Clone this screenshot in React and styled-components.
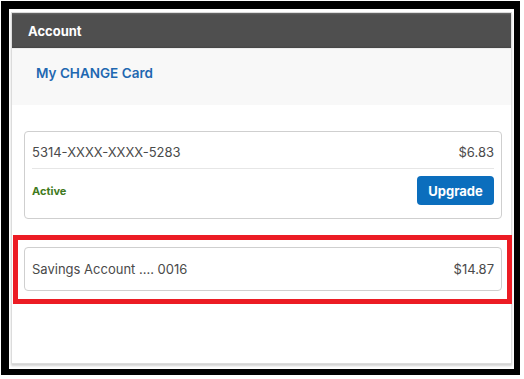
import styled, { createGlobalStyle } from "styled-components"

const Global = createGlobalStyle`
  body {
    margin: 0;
    background: #ffffff;
    font-family: "Inter", "Liberation Sans", sans-serif;
  }
`

const accounts = [
  { id: "card", number: "5314-XXXX-XXXX-5283", balance: "$6.83", status: "Active" },
]

const App = () => {
  return (
    <>
      <Global />
      <Frame>
        <Panel>
          <Header>Account</Header>
          <SubHeader>
            <a href="#">My CHANGE Card</a>
          </SubHeader>
          <Body>
            {accounts.map((acc) => (
              <Card key={acc.id}>
                <Row>
                  <span>{acc.number}</span>
                  <span>{acc.balance}</span>
                </Row>
                <Divider />
                <StatusRow>
                  <Status>{acc.status}</Status>
                  <Button>Upgrade</Button>
                </StatusRow>
              </Card>
            ))}
            <Highlight>
              <SavingsCard>
                <span>Savings Account .... 0016</span>
                <span>$14.87</span>
              </SavingsCard>
            </Highlight>
          </Body>
        </Panel>
      </Frame>
    </>
  )
}

export default App

const Frame = styled.div`
  box-sizing: border-box;
  width: 519px;
  height: 374px;
  margin: 1px 0 0 1px;
  border-style: solid;
  border-color: #000;
  border-width: 8px 6px 6px 8px;
  padding: 3px 2px 5px 2px;
  background: #fff;
`

const Panel = styled.div`
  box-sizing: border-box;
  width: 501px;
  height: 352px;
  border: 1px solid #dcdcdc;
  box-shadow: 0 2px 2px rgba(0, 0, 0, 0.18);
  display: flex;
  flex-direction: column;
`

const Header = styled.div`
  height: 35px;
  display: flex;
  align-items: center;
  padding: 0 16px;
  background: linear-gradient(#6a6a6a 0, #4f4f4f 2px, #4f4f4f 33px, #444 35px);
  color: #fff;
  font-weight: 700;
  font-size: 13px;
  border-bottom: 1px solid #ececec;
`

const SubHeader = styled.div`
  box-sizing: border-box;
  height: 56px;
  padding: 13px 24px 0;
  background: #f8f8f8;

  a {
    color: #1f68b1;
    font-size: 13.5px;
    font-weight: 600;
    text-decoration: none;
    line-height: 13px;
  }
`

const Body = styled.div`
  padding-top: 26px;
  display: flex;
  flex-direction: column;
  gap: 16px;
`

const Card = styled.div`
  box-sizing: border-box;
  margin: 0 9px 0 12px;
  border: 1px solid #cfcfcf;
  border-radius: 4px;
  padding: 0 7px;
`

const Row = styled.div`
  display: flex;
  justify-content: space-between;
  padding: 14px 0 9px;
  line-height: 13px;
  font-size: 13px;
  color: #4a4a4a;
`

const Divider = styled.div`
  height: 1px;
  background: #e6e6e6;
`

const StatusRow = styled.div`
  display: flex;
  justify-content: space-between;
  align-items: center;
  padding: 7px 0 13px;
`

const Status = styled.span`
  color: #3f7a20;
  font-size: 11px;
  font-weight: 700;
`

const Button = styled.button`
  height: 29px;
  width: 77px;
  border: 0;
  border-radius: 4px;
  background: #0b6ebd;
  color: #fff;
  font-family: inherit;
  font-size: 13px;
  font-weight: 700;
`

const Highlight = styled.div`
  margin: 0 -1px 0 1px;
  border: 5px solid #ec1c24;
  padding: 7px 5px 8px 6px;
`

const SavingsCard = styled.div`
  box-sizing: border-box;
  height: 44px;
  display: flex;
  justify-content: space-between;
  align-items: center;
  padding: 0 7px;
  border: 1px solid #cfcfcf;
  border-radius: 4px;
  font-size: 13px;
  color: #4a4a4a;
`
